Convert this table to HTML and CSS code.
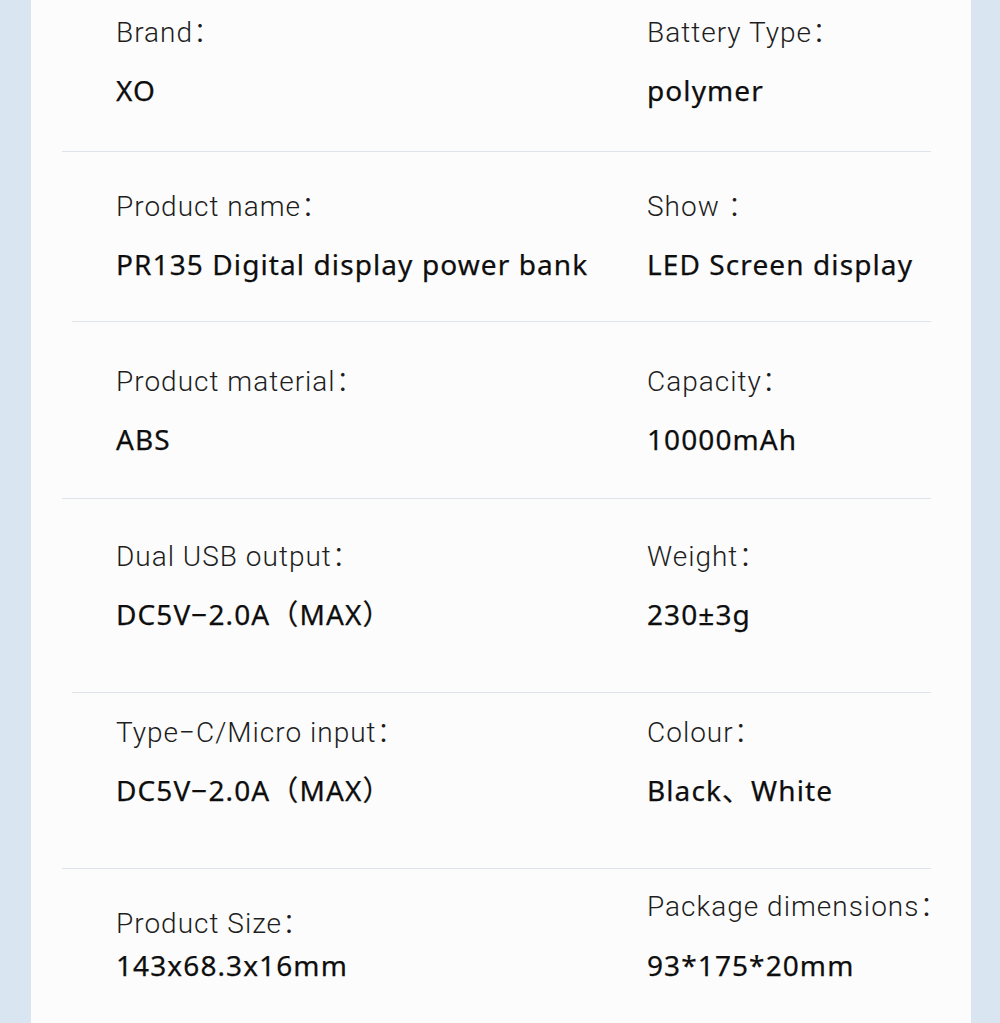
FILE: index.html
```html
<!DOCTYPE html>
<html>
<head>
<meta charset="utf-8">
<link rel="stylesheet" href="styles.css">
</head>
<body>
<div class="card">
  <div class="row r1">
    <div class="cell"><div class="label">Brand：</div><div class="value">XO</div></div>
    <div class="cell"><div class="label">Battery Type：</div><div class="value">polymer</div></div>
  </div>
  <div class="divider wide"></div>
  <div class="row r2">
    <div class="cell"><div class="label">Product name：</div><div class="value">PR135 Digital display power bank</div></div>
    <div class="cell"><div class="label">Show ：</div><div class="value">LED Screen display</div></div>
  </div>
  <div class="divider narrow d2"></div>
  <div class="row r3">
    <div class="cell"><div class="label">Product material：</div><div class="value">ABS</div></div>
    <div class="cell"><div class="label">Capacity：</div><div class="value">10000mAh</div></div>
  </div>
  <div class="divider wide d3"></div>
  <div class="row r4">
    <div class="cell"><div class="label">Dual USB output：</div><div class="value">DC5V−2.0A（MAX）</div></div>
    <div class="cell"><div class="label">Weight：</div><div class="value">230±3g</div></div>
  </div>
  <div class="divider narrow d4"></div>
  <div class="row r5">
    <div class="cell"><div class="label">Type−C/Micro input：</div><div class="value">DC5V−2.0A（MAX）</div></div>
    <div class="cell"><div class="label">Colour：</div><div class="value">Black、White</div></div>
  </div>
  <div class="divider wide d4"></div>
  <div class="row r6">
    <div class="cell c-left"><div class="label">Product Size：</div><div class="value">143x68.3x16mm</div></div>
    <div class="cell c-right"><div class="label">Package dimensions：</div><div class="value">93*175*20mm</div></div>
  </div>
</div>
</body>
</html>
```
FILE: styles.css
```css
html, body {
  margin: 0;
  padding: 0;
}
body {
  background: #d9e6f2;
  width: 1000px;
  height: 1023px;
  overflow: hidden;
}
.card {
  margin: 0 29px 0 31px;
  background: #fcfcfc;
  height: 1023px;
  overflow: hidden;
}
.row {
  display: grid;
  grid-template-columns: 531px 1fr;
  padding-left: 85px;
}
.cell {
  display: flex;
  flex-direction: column;
  gap: 17px;
}
.label {
  font-family: Roboto, "Noto Sans CJK SC", sans-serif;
  font-weight: 300;
  font-size: 28px;
  line-height: 40px;
  letter-spacing: 1px;
  color: #1e1e1e;
  white-space: nowrap;
}
.value {
  font-family: "Noto Sans", "Noto Sans CJK SC", sans-serif;
  font-weight: 400;
  font-size: 28px;
  line-height: 40px;
  letter-spacing: 1.1px;
  color: #0e0e0e;
  -webkit-text-stroke: 0.25px #0e0e0e;
  white-space: nowrap;
}
.divider {
  height: 1px;
  background: #dfe4ea;
  margin-right: 40px;
}
.divider.wide { margin-left: 31px; }
.divider.narrow { margin-left: 41px; }
.r1 { padding-top: 13px; margin-bottom: 41px; }
.r2 { padding-top: 35px; margin-bottom: 37px; }
.r3 { padding-top: 40px; margin-bottom: 39px; }
.r4 { padding-top: 38px; margin-bottom: 58px; }
.r5 { padding-top: 20px; margin-bottom: 58px; }
.r6 { padding-top: 18px; }
.c-left { padding-top: 17px; gap: 1px; }
.c-right { gap: 18px; }
```
